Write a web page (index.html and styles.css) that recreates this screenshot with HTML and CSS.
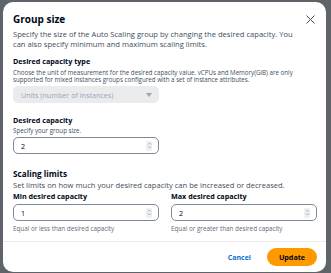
FILE: index.html
```
<!DOCTYPE html>
<html>
<head>
  <meta charset="UTF-8" />
  <title>Group size</title>
  <link rel="stylesheet" href="styles.css">
</head>
<body>
  <div class="modal">
    <div class="modal-body">
      <div class="modal-header">
        <h2>Group size</h2>
        <button class="close-btn" aria-label="Close">
          <svg width="9" height="9" viewBox="0 0 9 9"><path d="M0.5 0.5L8.5 8.5M8.5 0.5L0.5 8.5" stroke="#414d5c" stroke-width="1" fill="none"/></svg>
        </button>
      </div>
      <p class="desc">Specify the size of the Auto Scaling group by changing the desired capacity. You can also specify minimum and maximum scaling limits.</p>

      <div class="field first">
        <label>Desired capacity type</label>
        <p class="help">Choose the unit of measurement for the desired capacity value. vCPUs and Memory(GiB) are only supported for mixed instances groups configured with a set of instance attributes.</p>
        <div class="select disabled">
          <span>Units (number of instances)</span>
          <svg width="6" height="4" viewBox="0 0 6 4"><path d="M0 0H6L3 4Z" fill="#9ba7b6"/></svg>
        </div>
      </div>

      <div class="field">
        <label>Desired capacity</label>
        <p class="help">Specify your group size.</p>
        <div class="input">
          <span>2</span>
          <span class="spin"><svg width="5" height="7" viewBox="0 0 5 7"><path d="M1 2.5L2.5 1L4 2.5M1 4.5L2.5 6L4 4.5" stroke="#8a8f96" stroke-width="0.7" fill="none"/></svg></span>
        </div>
      </div>

      <h3>Scaling limits</h3>
      <p class="desc small-gap">Set limits on how much your desired capacity can be increased or decreased.</p>
      <div class="limits">
        <div class="limit">
          <label>Min desired capacity</label>
          <div class="input">
            <span>1</span>
            <span class="spin"><svg width="5" height="7" viewBox="0 0 5 7"><path d="M1 2.5L2.5 1L4 2.5M1 4.5L2.5 6L4 4.5" stroke="#8a8f96" stroke-width="0.7" fill="none"/></svg></span>
          </div>
          <p class="hint">Equal or less than desired capacity</p>
        </div>
        <div class="limit">
          <label>Max desired capacity</label>
          <div class="input">
            <span>2</span>
            <span class="spin"><svg width="5" height="7" viewBox="0 0 5 7"><path d="M1 2.5L2.5 1L4 2.5M1 4.5L2.5 6L4 4.5" stroke="#8a8f96" stroke-width="0.7" fill="none"/></svg></span>
          </div>
          <p class="hint">Equal or greater than desired capacity</p>
        </div>
      </div>
    </div>
    <div class="modal-footer">
      <button class="link-btn">Cancel</button>
      <button class="primary-btn">Update</button>
    </div>
  </div>
</body>
</html>
```
FILE: styles.css
```
body {
  margin: 0;
  background-color: #5f646b;
  font-family: "Open Sans", Arial, sans-serif;
  color: #000716;
}
.modal {
  margin: 2px 5px 0 3px;
  width: 323px;
  height: 270px;
  background: #fff;
  border-radius: 10px;
  display: flex;
  flex-direction: column;
  overflow: hidden;
}
.modal-body {
  padding: 11px 10px 0 10px;
  flex: 1;
}
.modal-header {
  display: flex;
  justify-content: space-between;
  align-items: flex-start;
}
h2 {
  margin: 0;
  font-size: 10px;
  line-height: 13px;
  font-weight: 700;
}
.close-btn {
  border: none;
  background: none;
  padding: 0;
  margin: 0 1px 0 0;
  height: 13px;
  display: flex;
  align-items: center;
}
.desc {
  margin: 2.5px 0 0;
  font-size: 7.6px;
  line-height: 10px;
  color: #414d5c;
  padding-right: 12px;
}
.field.first {
  margin-top: 8.5px;
}
.field {
  margin-top: 12.5px;
  width: 146px;
}
.field.first {
  width: auto;
}
label {
  display: block;
  font-size: 7.2px;
  line-height: 9px;
  font-weight: 700;
}
.help {
  margin: 2.5px 0 0;
  font-size: 6.2px;
  line-height: 7.5px;
  color: #414d5c;
}
.select {
  margin-top: 2.5px;
  width: 146px;
  height: 17px;
  box-sizing: border-box;
  border-radius: 5px;
  display: flex;
  align-items: center;
  justify-content: space-between;
  padding: 0 7px 0 8px;
  font-size: 7.2px;
}
.select.disabled {
  background: #e9ebed;
  color: #9ba7b6;
}
.input {
  margin-top: 2.5px;
  height: 17px;
  box-sizing: border-box;
  border: 1px solid #7d8998;
  border-radius: 5px;
  display: flex;
  align-items: center;
  justify-content: space-between;
  padding: 0 6px 0 7px;
  font-size: 7.2px;
}
.spin {
  width: 6px;
  height: 10px;
  background: #f0f0f0;
  display: flex;
  align-items: center;
  justify-content: center;
}
h3 {
  margin: 14px 0 0;
  font-size: 8.2px;
  line-height: 11px;
  font-weight: 700;
}
.desc.small-gap {
  margin-top: 1px;
  padding-right: 0;
}
.limits {
  margin-top: 2px;
  display: grid;
  grid-template-columns: 146px 146px;
  column-gap: 12px;
}
.limit .input {
  margin-top: 3px;
}
.hint {
  margin: 4px 0 0;
  font-size: 6.3px;
  line-height: 7.5px;
  color: #5f6b7a;
}
.modal-footer {
  border-top: 1px solid #e9ebed;
  padding: 6px 9px 6px 10px;
  display: flex;
  justify-content: flex-end;
  align-items: center;
  gap: 16px;
}
.link-btn {
  border: none;
  background: none;
  padding: 0;
  font-family: inherit;
  font-size: 7px;
  font-weight: 700;
  color: #0972d3;
}
.primary-btn {
  border: none;
  background: #ff9900;
  color: #000716;
  font-family: inherit;
  font-size: 7.2px;
  font-weight: 700;
  width: 50px;
  height: 18px;
  border-radius: 9px;
  padding: 0;
}
```
